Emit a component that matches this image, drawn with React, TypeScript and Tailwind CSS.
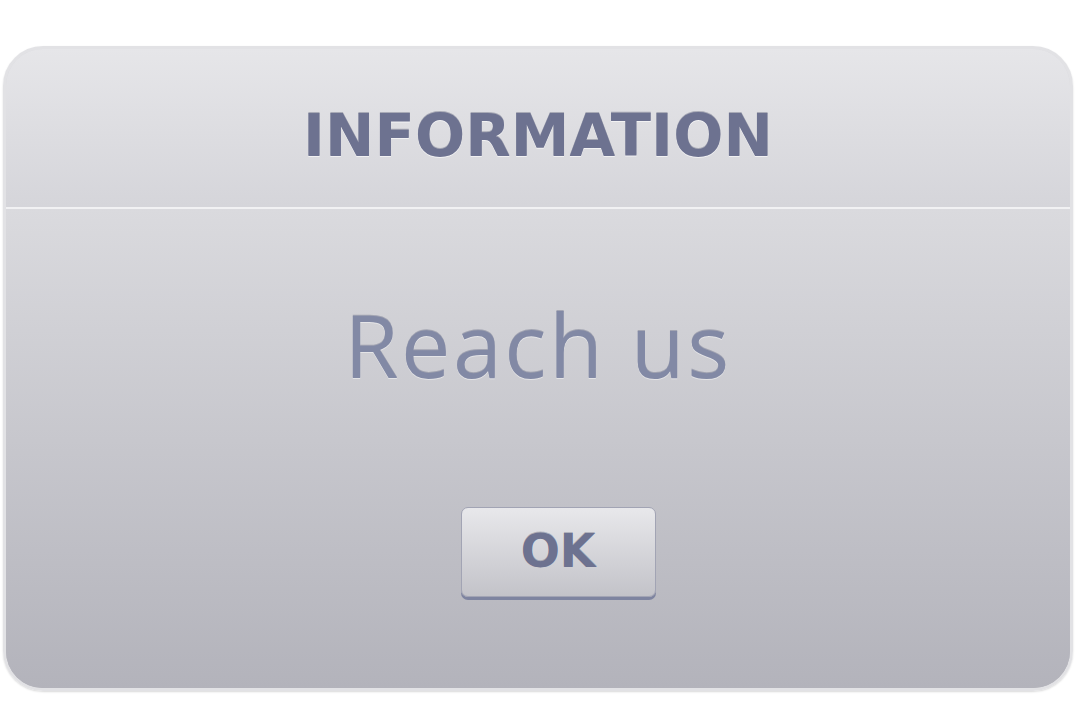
import React from "react";

const InfoDialog: React.FC<{ title: string; message: string; onOk?: () => void }> = ({
  title,
  message,
  onOk,
}) => {
  return (
    <div className="flex h-[645px] w-[1070px] flex-col overflow-hidden rounded-[40px] border-[3px] border-[#e2e2e5] bg-gradient-to-b from-[#dcdce0] to-[#b3b3bb] shadow-[0_1px_2px_rgba(0,0,0,0.15)]">
      {/* header */}
      <div className="flex h-[158px] shrink-0 items-center justify-center bg-gradient-to-b from-[#e6e6e9] to-[#d5d5da] pt-[15px]">
        <h1
          className="text-[59px] font-bold leading-none tracking-[0.1px] text-[#6d7290] [text-shadow:0_-1px_0_rgba(70,75,100,0.35),0_1px_0_rgba(255,255,255,0.6)]"
          style={{ fontFamily: '"DejaVu Sans", Verdana, sans-serif' }}
        >
          {title}
        </h1>
      </div>
      <div className="h-[2px] shrink-0 bg-[#f1f1f3]" />

      {/* body */}
      <div className="flex flex-1 flex-col items-center bg-gradient-to-b from-[#dadade] to-[#b3b3bb]">
        <p
          className="mt-[91px] text-[88px] leading-none tracking-[2.5px] text-[#8289a5] [text-shadow:0_-1px_0_rgba(80,85,115,0.35),0_1px_0_rgba(255,255,255,0.45)]"
          style={{ fontFamily: '"Open Sans", "Noto Sans", sans-serif' }}
        >
          {message}
        </p>

        <button
          onClick={onOk}
          className="ml-[40px] mt-[119px] flex h-[90px] w-[195px] items-center justify-center rounded-[7px] border border-[#a2a4b4] bg-gradient-to-b from-[#e8e8eb] to-[#c3c3c9] pb-[2px] text-[46px] font-bold leading-none text-[#6d7290] shadow-[0_3px_0_#7e84a0] [text-shadow:0_-1px_0_rgba(70,75,100,0.3)]"
          style={{ fontFamily: '"DejaVu Sans", Verdana, sans-serif' }}
        >
          OK
        </button>
      </div>
    </div>
  );
};

export default function App() {
  return (
    <div className="h-[720px] w-[1080px] overflow-hidden bg-white pl-[3px] pt-[46px]">
      <InfoDialog title="INFORMATION" message="Reach us" />
    </div>
  );
}
